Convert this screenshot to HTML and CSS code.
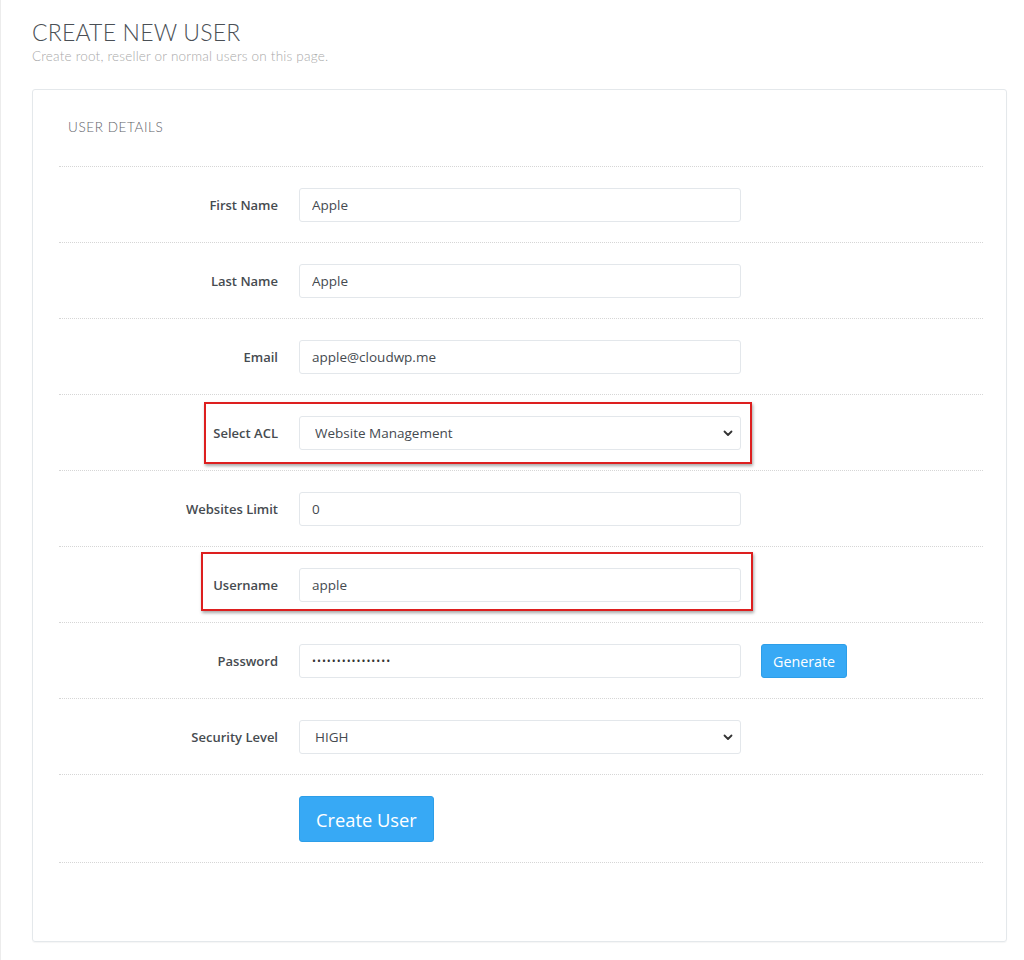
FILE: index.html
```html
<!DOCTYPE html>
<html>
<head>
<meta charset="utf-8">
<link rel="stylesheet" href="styles.css">
</head>
<body>
<div class="page">
  <div class="page-head">
    <h1 class="title">CREATE NEW USER</h1>
    <p class="subtitle">Create root, reseller or normal users on this page.</p>
  </div>
  <div class="card">
    <div class="card-head">USER DETAILS</div>
    <form class="form">
      <div class="row">
        <label class="label">First Name</label>
        <input class="field" type="text" value="Apple">
      </div>
      <div class="row">
        <label class="label">Last Name</label>
        <input class="field" type="text" value="Apple">
      </div>
      <div class="row">
        <label class="label">Email</label>
        <input class="field" type="text" value="apple@cloudwp.me">
      </div>
      <div class="row">
        <label class="label">Select ACL</label>
        <div class="select-wrap">
          <select class="field select"><option>Website Management</option></select>
          <svg class="chev" width="10" height="7" viewBox="0 0 10 7"><path d="M1.5 1.5 L5 5 L8.5 1.5" fill="none" stroke="#333" stroke-width="1.8" stroke-linecap="round" stroke-linejoin="round"/></svg>
        </div>
        <div class="mark mark-acl"></div>
      </div>
      <div class="row">
        <label class="label">Websites Limit</label>
        <input class="field" type="text" value="0">
      </div>
      <div class="row">
        <label class="label">Username</label>
        <input class="field" type="text" value="apple">
        <div class="mark mark-user"></div>
      </div>
      <div class="row">
        <label class="label">Password</label>
        <input class="field pw" type="text" value="••••••••••••••••">
        <button type="button" class="btn btn-sm">Generate</button>
      </div>
      <div class="row">
        <label class="label">Security Level</label>
        <div class="select-wrap">
          <select class="field select"><option>HIGH</option></select>
          <svg class="chev" width="10" height="7" viewBox="0 0 10 7"><path d="M1.5 1.5 L5 5 L8.5 1.5" fill="none" stroke="#333" stroke-width="1.8" stroke-linecap="round" stroke-linejoin="round"/></svg>
        </div>
      </div>
      <div class="row">
        <span class="label"></span>
        <button type="button" class="btn btn-lg">Create User</button>
      </div>
    </form>
  </div>
</div>
</body>
</html>
```

FILE: styles.css
```css
* { box-sizing: border-box; }
html, body { margin: 0; padding: 0; background: #fff; }
body { font-family: "Open Sans", "Liberation Sans", sans-serif; color: #444; }

.page {
  border-left: 1px solid #ececec;
  padding: 19px 17px 18px 31px;
  min-height: 960px;
}
.title {
  margin: 0;
  font-family: "Lato", "Liberation Sans", sans-serif;
  font-weight: 300;
  font-size: 23px;
  line-height: 26px;
  letter-spacing: 0.2px;
  color: #4a4f55;
}
.subtitle {
  margin: 2px 0 0;
  font-family: "Lato", "Liberation Sans", sans-serif;
  font-weight: 300;
  font-size: 13.5px;
  line-height: 18px;
  letter-spacing: 0.2px;
  color: #a9a9a9;
}
.card {
  margin-top: 24px;
  border: 1px solid #e4e8eb;
  border-radius: 3px;
  box-shadow: 0 1px 1px rgba(0,0,0,0.04);
  padding: 0 23px 78px 26px;
}
.card-head {
  height: 77px;
  padding: 29px 0 0 9px;
  font-family: "Lato", "Liberation Sans", sans-serif;
  font-weight: 300;
  font-size: 13.5px;
  color: #5f646a;
  letter-spacing: 0.6px;
  border-bottom: 1px dotted #d6d6d6;
}
.form { display: block; }
.row {
  position: relative;
  display: flex;
  align-items: center;
  gap: 21px;
  padding: 21px 0 20px;
  border-bottom: 1px dotted #d6d6d6;
}
.label {
  width: 219px;
  flex: none;
  text-align: right;
  font-size: 13px;
  font-weight: 600;
  color: #464b50;
}
.field {
  width: 442px;
  height: 34px;
  padding: 0 12px;
  border: 1px solid #e3e7eb;
  border-radius: 3px;
  background: #fff;
  font-family: "Open Sans", "Liberation Sans", sans-serif;
  font-size: 13.5px;
  color: #454a50;
  outline: none;
}
.pw { font-size: 10.5px; letter-spacing: 1px; color: #333; }
.select-wrap { position: relative; width: 442px; }
.select {
  -webkit-appearance: none;
  appearance: none;
  padding-left: 15px;
  display: block;
}
.chev { position: absolute; right: 8px; top: 14px; pointer-events: none; }
.btn {
  border: 1px solid #2d9ee8;
  background: #37a9f5;
  color: #fff;
  border-radius: 3px;
  font-family: "Open Sans", "Liberation Sans", sans-serif;
  cursor: pointer;
}
.btn-sm {
  margin-left: -1px;
  height: 34px;
  padding: 0 11px;
  font-size: 14.3px;
}
.btn-lg {
  height: 46px;
  padding: 0 16px;
  font-size: 18.3px;
}
.mark {
  position: absolute;
  border: 2px solid #dd1f1f;
  box-shadow: 1px 2px 3px rgba(0,0,0,0.35);
  pointer-events: none;
}
.mark-acl { left: 145px; top: 7px; width: 548px; height: 62px; }
.mark-user { left: 142px; top: 5px; width: 552px; height: 59px; }
```
